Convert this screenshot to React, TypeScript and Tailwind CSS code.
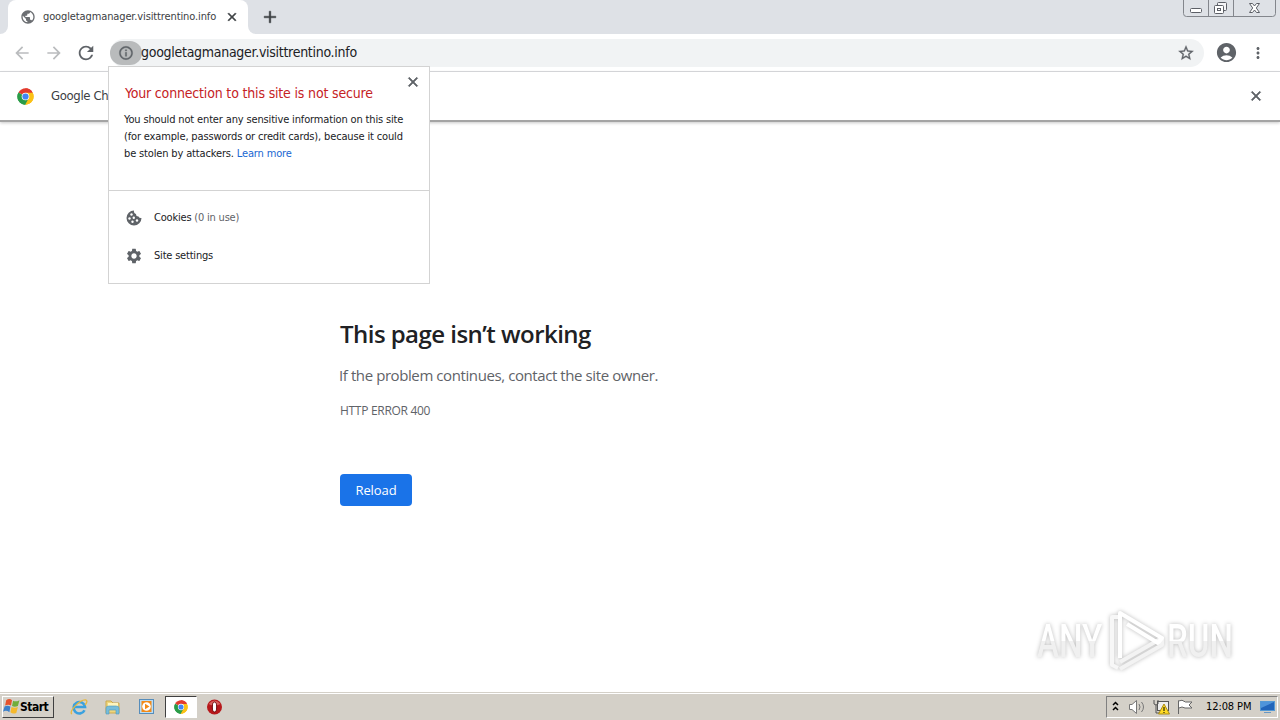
import React from 'react';
import {
  MdAccountCircle,
  MdAdd,
  MdArrowBack,
  MdArrowForward,
  MdClose,
  MdInfoOutline,
  MdMoreVert,
  MdPublic,
  MdRefresh,
  MdSettings,
  MdStarBorder,
} from 'react-icons/md';

const ChromeLogo: React.FC<{ size: number }> = ({ size }) => (
  <svg width={size} height={size} viewBox="0 0 48 48" className="shrink-0">
    <path d="M24 24 L4.1 12.5 A23 23 0 0 1 43.9 12.5 Z" fill="#e33b2e" />
    <path d="M24 24 L43.9 12.5 A23 23 0 0 1 24 47 Z" fill="#fbc116" />
    <path d="M24 24 L24 47 A23 23 0 0 1 4.1 12.5 Z" fill="#2a9c48" />
    <path d="M24 13.5 H44.4 L43.9 12.5 A23 23 0 0 0 24 1 Z" fill="#e33b2e" />
    <path d="M33.1 29.2 L22.9 47 H24 A23 23 0 0 0 44.4 13.5 H24 Z" fill="#fbc116" />
    <path d="M14.9 29.2 L4.1 12.5 A23 23 0 0 0 22.9 47 L33.1 29.2 Z" fill="#2a9c48" />
    <circle cx="24" cy="24" r="10.8" fill="#fff" />
    <circle cx="24" cy="24" r="8.8" fill="#4285f4" />
  </svg>
);

const CookieIcon = () => (
  <svg width="18" height="18" viewBox="0 0 18 18" className="mr-3 shrink-0">
    <path d="M9 1.500A7.500 7.500 0 1 0 16.500 9Q14.500 9.500 13.500 7.500Q11 7.500 11 5Q8.500 4 9 1.500Z" fill="#5f6368" />
    <g fill="#fff">
      <circle cx="6.500" cy="5.500" r="1.200" />
      <circle cx="4.500" cy="9.500" r="1.200" />
      <circle cx="8.800" cy="8.700" r="1.200" />
      <circle cx="7.500" cy="12.800" r="1.200" />
      <circle cx="12" cy="11.500" r="1.200" />
    </g>
  </svg>
);

const WindowButtons = () => (
  <svg width="94" height="18" viewBox="0 0 94 18" className="absolute right-[3px] top-0">
    <path d="M.5 0V13.5Q.5 16.5 3.5 16.5H89.5Q92.5 16.5 92.5 13.5V0M25.5 0V16M50.5 0V16" fill="none" stroke="#83868c" />
    <rect x="7.5" y="8.5" width="11" height="4" rx="1" fill="#fff" stroke="#5c5f66" />
    <rect x="34.5" y="2.5" width="9" height="8" rx="1" fill="#f4f4f6" stroke="#5c5f66" />
    <rect x="31.5" y="5.5" width="9" height="8" rx="1" fill="#fff" stroke="#5c5f66" />
    <rect x="34.5" y="8.5" width="3" height="2" fill="#fff" stroke="#5c5f66" />
    <path d="M66.500 3.500H69.500L71.500 6L73.500 3.500H76.500L73.300 8L76.500 12.500H73.500L71.500 10L69.500 12.500H66.500L69.700 8Z" fill="#fff" stroke="#5c5f66" />
  </svg>
);

const TabStrip = () => (
  <div className="relative flex h-[34px] bg-[#dee1e6]">
    <div className="flex w-2 bg-white">
      <div className="flex-1 rounded-br-lg bg-[#dee1e6]" />
    </div>
    <div className="flex h-[34px] w-60 items-center bg-[#dee1e6]">
      <div className="flex h-[34px] w-60 items-center rounded-t-lg bg-white pl-3">
        <MdPublic className="size-4 shrink-0 text-[#6b6e72]" />
        <span className="ml-[7px] w-[180px] whitespace-nowrap pt-px text-[11px] tracking-[-0.12px] text-[#3c4043]">
          googletagmanager.visittrentino.info
        </span>
        <MdClose className="ml-0.5 size-3.5 text-[#3c4043] [&>path:last-child]:stroke-1" />
      </div>
    </div>
    <div className="flex w-2 bg-white">
      <div className="flex-1 rounded-bl-lg bg-[#dee1e6]" />
    </div>
    <MdAdd className="ml-1 mt-[7px] size-5 text-[#3c4043] [&>path:last-child]:stroke-[0.5]" />
    <WindowButtons />
  </div>
);

const Toolbar = () => (
  <div className="flex h-[38px] items-center border-b border-[#d5d7da] bg-white pl-3 text-[#5f6368]">
    <MdArrowBack className="size-5 text-[#babcbe]" />
    <MdArrowForward className="ml-3 size-5 text-[#babcbe]" />
    <MdRefresh className="ml-3 size-5 [&>path:first-child]:stroke-[0.5]" viewBox="1 1 22 22" />
    <div className="ml-[14px] flex h-7 w-[1094px] items-center rounded-full bg-[#f1f3f4]">
      <div className="flex h-6 w-8 items-center justify-center rounded-full bg-[#b9bbbc]">
        <MdInfoOutline className="size-4 [&>path:last-child]:stroke-[0.5]" />
      </div>
      <span className="-ml-px flex-1 whitespace-nowrap text-[14px] tracking-[-0.28px] text-[#202124]">
        googletagmanager.visittrentino.info
      </span>
      <MdStarBorder className="mr-[9px] size-[18px] [&>path:last-child]:stroke-[0.4]" />
    </div>
    <MdAccountCircle className="ml-[11px] size-[23px]" />
    <MdMoreVert className="ml-[11px] size-[18px]" />
  </div>
);

const InfoBar = () => (
  <div className="flex h-[50px] items-center border-b-2 border-[#a4a4a4] bg-white pl-[17px] pr-4 shadow-[0_1px_3px_#c8c8c8]">
    <ChromeLogo size={17} />
    <span className="ml-[17px] w-[57px] whitespace-nowrap text-[13px] tracking-[-0.35px] text-[#3c4043]">Google Ch</span>
    <MdClose className="ml-auto size-4 text-[#5f6368] [&>path:last-child]:stroke-1" />
  </div>
);

const SitePopup = () => (
  <div className="absolute left-[108px] top-[66px] h-[218px] w-[322px] border border-[#d3d3d3] bg-white">
    <MdClose className="absolute right-2 top-[7px] size-4 text-[#5f6368] [&>path:last-child]:stroke-1" />
    <div className="h-[124px] border-b border-[#d3d3d3] pl-4 pt-4">
      <h2 className="whitespace-nowrap text-[14px] leading-5 tracking-[-0.17px] text-[#c5221f]">
        Your connection to this site is not secure
      </h2>
      <div className="-ml-px mt-2 whitespace-nowrap text-[11px] leading-[17px] tracking-[-0.15px] text-[#202124]">
        <p>You should not enter any sensitive information on this site</p>
        <p>(for example, passwords or credit cards), because it could</p>
        <p>
          be stolen by attackers. <a className="text-[#1967d2]">Learn more</a>
        </p>
      </div>
    </div>
    <div className="flex flex-col gap-5 pl-4 pt-[18px] text-[11px] leading-4 tracking-[-0.2px] text-[#202124]">
      <div className="flex items-center">
        <CookieIcon />
        <span className="-ml-px">
          Cookies <span className="text-[#5f6368]">(0 in use)</span>
        </span>
      </div>
      <div className="flex items-center">
        <MdSettings className="mr-3 size-[18px] text-[#5f6368]" />
        <span className="-ml-px">Site settings</span>
      </div>
    </div>
  </div>
);

const ErrorPage = () => (
  <main className="flex-1 pl-[340px] pt-[194px] font-['Open_Sans',sans-serif]">
    <h1 className="text-[24px] font-semibold leading-9 tracking-[-0.54px] text-[#202124]">This page isn’t working</h1>
    <p className="-ml-px mt-[11px] text-[15px] leading-6 tracking-[-0.41px] text-[#5f6368]">
      If the problem continues, contact the site owner.
    </p>
    <p className="mt-[14px] text-[12px] leading-5 tracking-[-0.3px] text-[#5f6368]">HTTP ERROR 400</p>
    <button className="mt-[53px] block h-8 w-[72px] rounded bg-[#1a73e8] pt-0.5 text-[13px] tracking-[-0.1px] text-white">
      Reload
    </button>
  </main>
);

const Watermark = () => (
  <div className="absolute left-[1037px] top-[608px] flex items-center font-['Roboto',sans-serif] text-[46px] font-medium leading-[66px] drop-shadow-[0_0_2px_#bbb]">
    <div className="w-[70px]">
      <span className="inline-block origin-left scale-x-[0.72] bg-linear-to-b from-white from-50% to-[#f0f0f0] to-50% bg-clip-text text-transparent">
        ANY
      </span>
    </div>
    <svg width="60" height="66" viewBox="0 0 60 66" fill="none" strokeWidth="4" strokeLinejoin="round">
      <path d="M11 9H5V57L11 60" stroke="#f7f7f7" />
      <path d="M13 61L55 37V30L13 54" stroke="#f3f3f3" />
      <path d="M13 50V5L55 30L51 35L20 16" stroke="#fff" />
    </svg>
    <div className="w-[70px]">
      <span className="inline-block origin-left scale-x-[0.72] bg-linear-to-b from-white from-50% to-[#f0f0f0] to-50% bg-clip-text text-transparent">
        RUN
      </span>
    </div>
  </div>
);

const Taskbar = () => (
  <footer className="flex h-7 items-center border-t border-[#d4d0c8] bg-[#d4d0c8] px-0.5 text-black shadow-[inset_0_1px_0_#fff]">
    <button className="flex h-[22px] w-[52px] items-center border border-b-[#404040] border-l-white border-r-[#404040] border-t-white text-[12px] font-bold tracking-[-0.5px]">
      <svg width="17" height="17" viewBox="0 0 16 16" className="shrink-0">
        <path d="M3 2Q6 0 8.500 2L7.500 7Q5 5.500 2 7Z" fill="#e5532d" />
        <path d="M9.500 2.500Q12 4 15.500 2L14 7.500Q11 9 8.500 7.500Z" fill="#72ad3a" />
        <path d="M1.500 8Q4 6.500 7 8L6 13.500Q3 11 0 13Z" fill="#3b80ca" />
        <path d="M8 8.500Q11 10 14 8.500L12.500 14Q9.500 15.500 7 13.500Z" fill="#f6b92c" />
      </svg>
      <span>Start</span>
    </button>
    <div className="ml-4 flex items-center">
      <svg width="18" height="18" viewBox="0 0 18 18" fill="none">
        <path d="M14.500 12.200A5.700 5.700 0 1 1 15 9H5" stroke="#3aa1df" strokeWidth="2.600" />
        <path d="M2 16C-2 14 10 1 16 2C18 3 16 6 15 7" stroke="#e7b83e" strokeWidth="1.300" />
      </svg>
      <svg width="18" height="18" viewBox="0 0 18 18" className="ml-4">
        <path d="M2 3H7L9 5H15V15H2Z" fill="#efd67c" stroke="#cba94e" />
        <path d="M4 5H14V9H4Z" fill="#fff5bd" />
        <path d="M2 16V10Q2 8 5 8H12Q15 8 15 10V16H12V12H5V16Z" fill="#76bddb" stroke="#4f98bc" strokeWidth=".6" />
      </svg>
      <svg width="18" height="18" viewBox="0 0 18 18" className="ml-4">
        <rect x="1.500" y="1.500" width="14" height="14" fill="#b9dcf4" stroke="#568dbb" />
        <rect x="3.500" y="3" width="10" height="11" fill="#f28a18" />
        <circle cx="8.500" cy="8.500" r="4.300" fill="#fff" />
        <path d="M7 5.700L11.500 8.500L7 11.300Z" fill="#f28a18" />
      </svg>
      <div className="ml-[9px] flex h-[22px] w-8 items-center justify-center border border-b-white border-l-[#404040] border-r-white border-t-[#404040] bg-white">
        <ChromeLogo size={14} />
      </div>
      <svg width="18" height="18" viewBox="0 0 18 18" className="ml-[9px]">
        <circle cx="8.500" cy="9" r="7.500" fill="#b7181b" />
        <path d="M2.500 6Q8.500 -1 14.500 6Q8.500 9 2.500 6Z" fill="#d9605c" />
        <ellipse cx="8.500" cy="9" rx="2.200" ry="5" fill="#fff" stroke="#6b0608" />
      </svg>
    </div>
    <div className="ml-auto flex h-[22px] w-[172px] items-center border border-b-white border-l-[#808080] border-r-white border-t-[#808080] pl-1">
      <svg width="84" height="20" viewBox="0 0 84 20" fill="none" className="shrink-0">
        <path d="M2 8L4.500 5.500L7 8M2 13L4.500 10.500L7 13" stroke="#000" strokeWidth="1.500" />
        <path d="M18.500 7.500H21L25.500 3.500V16.500L21 12.500H18.500Z" fill="#fff" stroke="#777" />
        <path d="M28 7Q30 10 28 13M30.500 5Q34.500 10 30.500 15" stroke="#777" />
        <rect x="46.500" y="4.500" width="11" height="9" fill="#eee" stroke="#555" />
        <path d="M43 3V7Q45 9 47 7V3M45 8V16H50" stroke="#555" />
        <path d="M53 7L58.500 17H47.500Z" fill="#ffdb23" stroke="#aa8b15" />
        <path d="M53 10V14M53 15V16" stroke="#000" />
        <path d="M67.500 17V3.500M67.500 4Q71 2 74.500 5H81L78 8L81 11H74Q71 9 68 11" fill="#fff" stroke="#666" />
      </svg>
      <span className="ml-[11px] whitespace-nowrap pt-px text-[11px] tracking-[-0.1px]">12:08 PM</span>
      <svg width="16" height="14" viewBox="0 0 16 14" className="ml-[9px] shrink-0">
        <rect x=".5" y="1.500" width="14" height="9" fill="#2265ba" stroke="#5599d4" />
        <path d="M1 2H14L1 8Z" fill="#4f94da" />
        <path d="M4 12.500H11" stroke="#6898c4" />
      </svg>
    </div>
  </footer>
);

export default function App() {
  return (
    <div className="relative flex h-screen w-screen flex-col overflow-hidden bg-white font-['DejaVu_Sans_Condensed','DejaVu_Sans',sans-serif]">
      <TabStrip />
      <Toolbar />
      <InfoBar />
      <ErrorPage />
      <Taskbar />
      <SitePopup />
      <Watermark />
    </div>
  );
}
